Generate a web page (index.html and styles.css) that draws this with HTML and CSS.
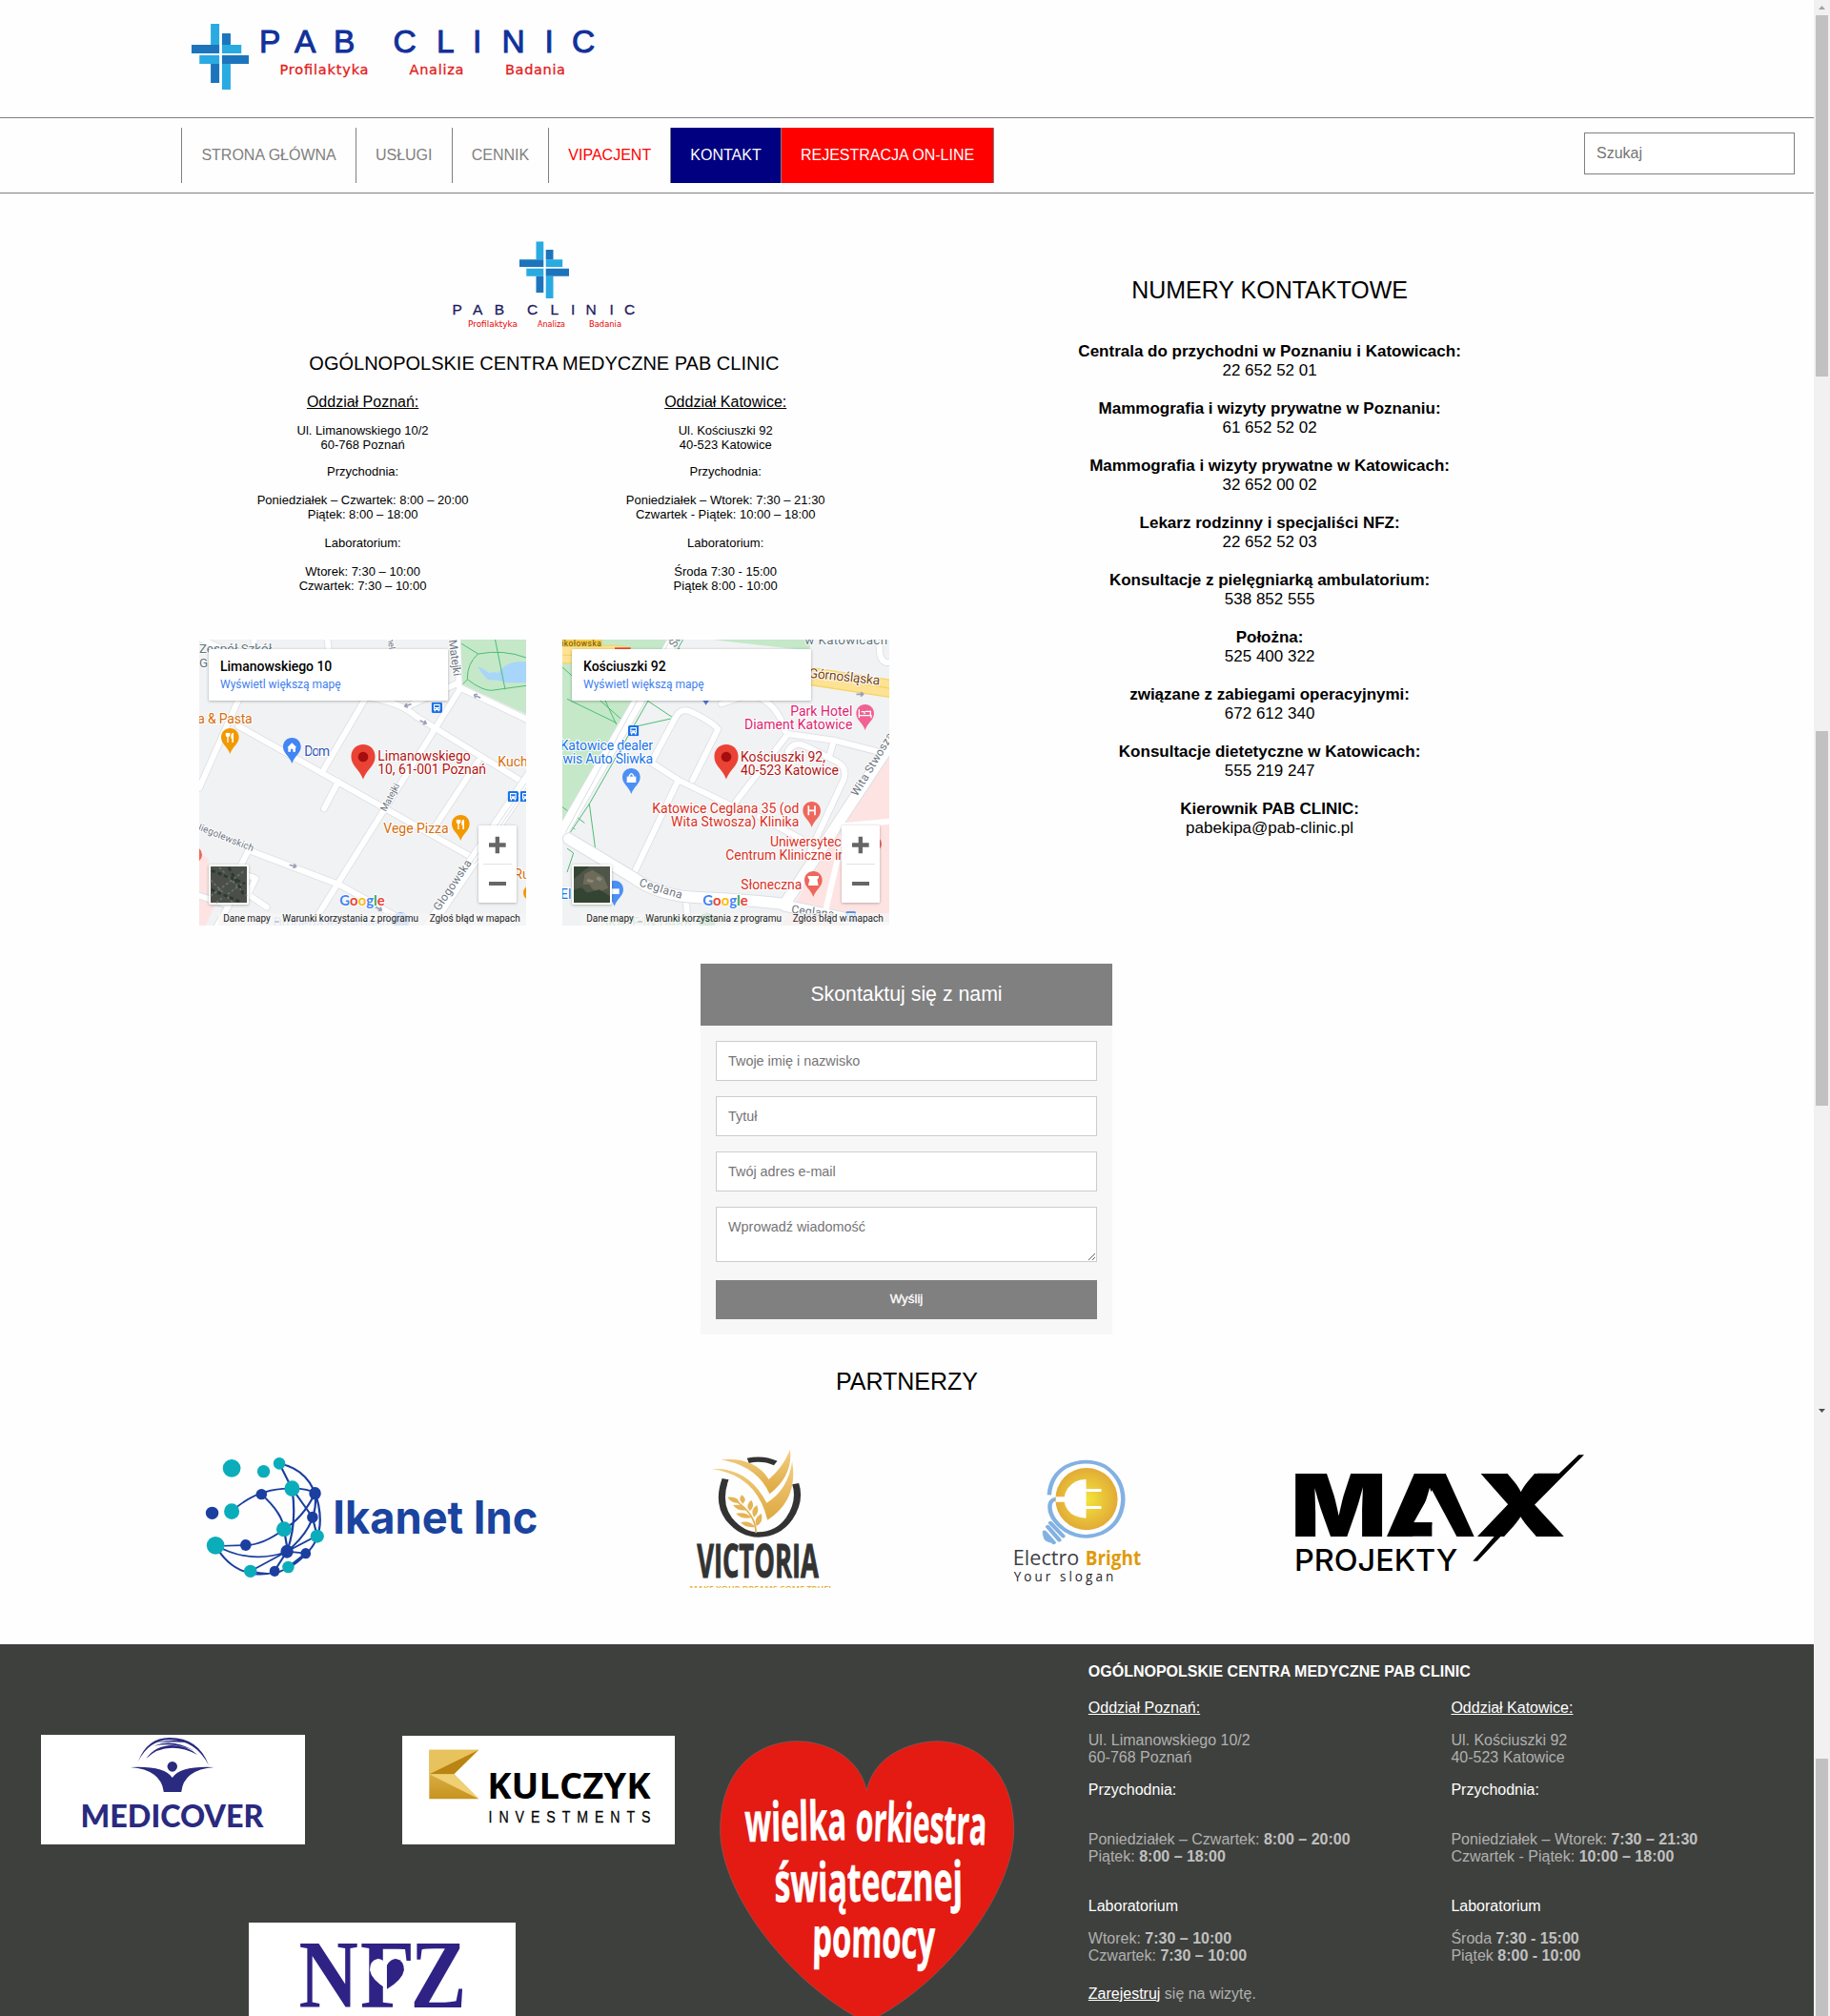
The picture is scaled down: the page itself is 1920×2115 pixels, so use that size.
FILE: index.html
```html
<!DOCTYPE html>
<html lang="pl">
<head>
<meta charset="utf-8">
<title>PAB CLINIC – Kontakt</title>
<link rel="stylesheet" href="styles.css">
</head>
<body>
<svg class="defs" width="0" height="0" aria-hidden="true">
  <symbol id="cross" viewBox="37 75 107 207" preserveAspectRatio="none">
    <path fill="#29abe2" d="M73 75h16v66H73zM94 141h36v27H94zM52 174h37v27H52zM94 201h16v81H94z"/>
    <path fill="#1c75bc" d="M94 105h16v36H94zM37 141h52v27H37zM94 174h50v27H94zM73 201h16v60H73z"/>
  </symbol>
  <symbol id="pin" viewBox="0 0 58 84">
    <path d="M29 1C13 1 1 13 1 29c0 22 19 28 28 53 9-25 28-31 28-53C57 13 45 1 29 1z"/>
  </symbol>
  <symbol id="fork" viewBox="0 0 30 32">
    <path fill="#fff" d="M1 0h14v8q0 5-5 6v17H6V14q-5-1-5-6zM18 8q0-7 8-8v31h-5V18h-3z"/>
  </symbol>
  <symbol id="bus" viewBox="0 0 34 34">
    <rect width="34" height="34" rx="5" fill="#1a73e8"/>
    <path fill="#fff" d="M7 6h20v19h-2v4h-4v-4h-8v4H9v-4H7z"/>
    <path fill="#1a73e8" d="M10 10h14v6H10zM10 19h3v3h-3zM21 19h3v3h-3z"/>
  </symbol>
  <symbol id="arrow" viewBox="0 0 26 16"><path fill="none" stroke="#9aa0b4" stroke-width="5" d="M0 8h20M14 1l8 7-8 7"/></symbol>
  <symbol id="google" viewBox="0 0 160 60">
    <text x="2" y="40" class="google" textLength="142" lengthAdjust="spacingAndGlyphs"><tspan fill="#4285f4">G</tspan><tspan fill="#ea4335">o</tspan><tspan fill="#fbbc04">o</tspan><tspan fill="#4285f4">g</tspan><tspan fill="#34a853">l</tspan><tspan fill="#ea4335">e</tspan></text>
  </symbol>
  <symbol id="mapui" viewBox="0 0 1029 900">
    <rect class="shade" x="30" y="30" width="753" height="162" rx="4"/>
    <rect class="shade" x="879" y="585" width="120" height="243" rx="4"/>
    <path stroke="#e0e0e0" stroke-width="3" d="M894 707h90"/>
    <path fill="#666" d="M912 640h20v-20h13v20h20v13h-20v20h-13v-20h-20zM912 762h54v12h-54z"/>
    <rect x="60" y="861" width="969" height="39" fill="#f5f5f5" opacity=".75"/>
    <g class="legal">
      <text x="76" y="888" textLength="148">Dane mapy</text>
      <path stroke="#777" stroke-width="2" d="M238 888h14"/>
      <text x="262" y="888" textLength="428">Warunki korzystania z programu</text>
      <text x="725" y="888" textLength="285">Zgłoś błąd w mapach</text>
    </g>
    <use href="#google" x="440" y="798" width="160" height="60"/>
    <use href="#pin" x="475" y="329" width="82" height="113" fill="#ea4335"/>
    <circle cx="516" cy="369" r="16" fill="#a50e0e"/>
  </symbol>
</svg>
<div class="page">
<div class="site">
  <header class="top">
    <svg class="brand" viewBox="190 20 450 80" role="img" aria-label="PAB CLINIC">
      <use href="#cross" x="200.8" y="25" width="60.3" height="69"/>
      <text class="brand-name" y="55" x="272 309 350 390 412.4 458 496 526.5 571.5 600">PAB CLINIC</text>
      <g class="brand-sub">
        <text x="293.5" y="78" textLength="93">Profilaktyka</text>
        <text x="429.5" y="78" textLength="57">Analiza</text>
        <text x="530" y="78" textLength="63">Badania</text>
      </g>
    </svg>
  </header>
  <nav class="nav">
    <ul class="menu">
      <li>STRONA GŁÓWNA</li><li>USŁUGI</li><li>CENNIK</li><li class="red">VIPACJENT</li><li class="active">KONTAKT</li><li class="register">REJESTRACJA ON-LINE</li>
    </ul>
    <input class="search" type="text" placeholder="Szukaj">
  </nav>

  <main>
    <section class="contact">
      <div class="places">
        <svg class="mini-brand" viewBox="470 250 202 100">
          <use href="#cross" x="545" y="253.3" width="52" height="59.7"/>
          <text class="mini-name" y="330" x="474.5 496 518.8 538 553 577.6 599 614.4 639.6 655">PAB CLINIC</text>
          <g class="mini-sub">
            <text x="491" y="343" textLength="52" lengthAdjust="spacingAndGlyphs">Profilaktyka</text>
            <text x="564" y="343" textLength="29" lengthAdjust="spacingAndGlyphs">Analiza</text>
            <text x="618" y="343" textLength="34" lengthAdjust="spacingAndGlyphs">Badania</text>
          </g>
        </svg>
        <h1>OGÓLNOPOLSKIE CENTRA MEDYCZNE PAB CLINIC</h1>
        <div class="cols">
          <div class="place">
            <h2>Oddział Poznań:</h2>
            <p>Ul. Limanowskiego 10/2<br>60-768 Poznań</p>
            <p class="tight">Przychodnia:</p>
            <p>Poniedziałek – Czwartek: 8:00 – 20:00<br>Piątek: 8:00 – 18:00</p>
            <p>Laboratorium:</p>
            <p>Wtorek: 7:30 – 10:00<br>Czwartek: 7:30 – 10:00</p>
          </div>
          <div class="place">
            <h2>Oddział Katowice:</h2>
            <p>Ul. Kościuszki 92<br>40-523 Katowice</p>
            <p class="tight">Przychodnia:</p>
            <p>Poniedziałek – Wtorek: 7:30 – 21:30<br>Czwartek - Piątek: 10:00 – 18:00</p>
            <p>Laboratorium:</p>
            <p>Środa 7:30 - 15:00<br>Piątek 8:00 - 10:00</p>
          </div>
        </div>
        <div class="maps">
          <svg class="map" viewBox="27 33 1029 900">
            <rect x="27" y="33" width="1029" height="900" fill="#f1f2f3"/>
            <path fill="#c5e8c9" d="M835 33h221v235L850 172z"/>
            <path fill="#a8d5fa" d="M903 118q20 5 35 20 15-5 30 0 20-30 60-35h28v66h-60q-30-10-60-10-20-18-33-41z"/>
            <path class="trail" d="M835 35l70 43q-35 30-34 80 45 35 75 35l110-15M905 78q80-15 151 12M990 190l-32-160M871 158q-8 10-15 15"/>
            <path fill="#fde4e3" d="M27 700l30 25v130l-30-10zM27 845h60l-40 88H27z"/>
            <g class="edge"><path d="M30 30l130 60M200 30l0 60M430 30l8 60M27 500L165 190M150 305L880 715M420 440L555 210M420 565l45-85M560 215q100 15 150 60L1060 490M380 933L850 185 L1060 285M690 240l150-70M840 30l5 150M770 620L905 415M180 695L470 805 640 900M160 740l20-40M165 770l40 15-25 50 60 40M30 840l90 30-40 70"/></g>
            <g class="road"><path d="M30 30l130 60M200 30l0 60M430 30l8 60M27 500L165 190M150 305L880 715M420 440L555 210M420 565l45-85M560 215q100 15 150 60L1060 490M380 933L850 185 L1060 285M690 240l150-70M840 30l5 150M770 620L905 415M180 695L470 805 640 900M160 740l20-40M165 770l40 15-25 50 60 40M30 840l90 30-40 70"/></g>
            <path class="edge wide" d="M740 950L1090 430"/><path class="road wide" d="M740 950L1090 430"/>
            <path stroke="#c9ccd2" stroke-width="2" d="M885 735L1056 485M893 740L1056 500"/>
            <use href="#arrow" x="720" y="285" width="26" height="16" transform="rotate(25 733 293)"/>
            <use href="#arrow" x="310" y="737" width="26" height="16" transform="rotate(15 323 745)"/>
            <use href="#arrow" x="670" y="232" width="26" height="16" transform="rotate(160 683 240)"/>
            <use href="#arrow" x="888" y="203" width="26" height="16" transform="rotate(205 901 211)"/>
            <use href="#arrow" x="580" y="872" width="26" height="16" transform="rotate(30 593 880)"/>
            <g class="street">
              <text x="27" y="75" class="big">Zespół Szkół</text><text x="27" y="120" class="big">Gi</text>
              <text transform="translate(812 35) rotate(82)" textLength="115">Matejki</text>
              <text transform="translate(615 -5) rotate(82)" font-size="28">Kanel</text>
              <text transform="translate(614 576) rotate(-62)" class="small" textLength="95">Matejki</text>
              <text transform="translate(10 626) rotate(22)" class="small" textLength="198">Niegolewskich</text>
              <text transform="translate(782 889) rotate(-56)" textLength="185">Głogowska</text>
            </g>
            <g class="poi">
              <text x="22" y="297" class="food" textLength="172">a &amp; Pasta</text>
              <use href="#pin" x="95" y="311" width="58" height="84" fill="#f29900"/><use href="#fork" x="109" y="326" width="30" height="32"/>
              <use href="#pin" x="290" y="341" width="58" height="84" fill="#4285f4"/><path fill="#fff" d="M304 373l15-15 15 15h-4v13h-8v-9h-7v9h-8v-13z"/>
              <text x="358" y="399" fill="#2f55b5" textLength="80">Dom</text>
              <text x="967" y="432" class="food">Kuchnia</text>
              <text x="607" y="642" class="food" textLength="205">Vege Pizza</text>
              <use href="#pin" x="821" y="584" width="58" height="84" fill="#f29900"/><use href="#fork" x="835" y="599" width="30" height="32"/>
              <text x="1018" y="787" class="food">Ru</text><circle cx="1071" cy="830" r="24" fill="#f29900"/>
              <circle cx="11" cy="710" r="25" fill="#ee675c"/>
              <text x="589" y="415" class="target" textLength="292">Limanowskiego</text>
              <text x="589" y="457" class="target" textLength="341">10, 61-001 Poznań</text>
              <text x="260" y="938" fill="#9fbdf5" textLength="365">Drogeria Rossmann</text>
              <circle cx="661" cy="918" r="27" fill="#8db5f5"/>
            </g>
            <use href="#bus" x="758" y="230" width="34" height="34"/><use href="#bus" x="998" y="510" width="34" height="34"/><use href="#bus" x="1037" y="510" width="34" height="34"/>
            <use href="#mapui" x="27" y="33" width="1029" height="900"/>
            <text x="93" y="132" class="place-name" textLength="352">Limanowskiego 10</text>
            <text x="93" y="186" class="place-link" textLength="380">Wyświetl większą mapę</text>
            <rect class="shade" x="57" y="741" width="126" height="126" rx="6"/>
            <rect x="63" y="747" width="114" height="114" fill="#4a4f49"/>
            <path stroke="#6d6f69" stroke-width="5" stroke-dasharray="9 6" d="M63 840L170 760M80 861L177 790M63 790l70 71M90 750l87 90"/><path stroke="#2c3a30" stroke-width="9" stroke-dasharray="12 9" d="M66 760l105 40M65 820l90 38M120 750l50 90"/>
          </svg>
          <svg class="map" viewBox="30 33 1029 900">
            <rect x="30" y="33" width="1029" height="900" fill="#f1f2f4"/>
            <path fill="#c5e8c9" d="M30 33h350L30 660zM500 33h309v35z"/>
            <path fill="#fde4e3" d="M1059 340v593H720l60-100L960 540z"/>
            <path class="trail" d="M30 120l210 185M45 220l155 75M165 225l35 75M380 280L200 320M410 33L115 550l20 150M290 220l90 60M30 600l40 30M115 550l-60 90M45 690l20 15-20 60M30 560l70 50M400 60l-50 30"/>
            <path fill="none" stroke="#f5d565" stroke-width="58" d="M20 80h120q60-5 100 5M790 145l290 45"/>
            <path fill="none" stroke="#fde293" stroke-width="50" d="M20 80h120q60-5 100 5M790 145l290 45"/>
            <path stroke="#f5d565" stroke-width="4" d="M800 140l259 46M30 82h120"/>
            <path class="edge wide" d="M400 0L30 640"/><path class="road wide" d="M400 0L30 640"/>
            <path stroke="#c9ccd2" stroke-width="2" d="M370 33L40 640"/>
            <g class="edge"><path d="M250 780L395 475M310 420L395 475 560 555 M310 420l75-140q20-40 60-15 60 30 75 50l-80 160M575 545L740 330l145 20 175 45M885 350l-15 50M740 385q20-35 60-15l90 45q40 20 25 60L800 720M650 590l130 70M640 210q70 30 90 110M530 235l60-20M420 860l5 73M1030 30q-10 80 30 75"/></g>
            <g class="road"><path d="M250 780L395 475M310 420L395 475 560 555 M310 420l75-140q20-40 60-15 60 30 75 50l-80 160M575 545L740 330l145 20 175 45M885 350l-15 50M740 385q20-35 60-15l90 45q40 20 25 60L800 720M650 590l130 70M640 210q70 30 90 110M530 235l60-20M420 860l5 73M1030 30q-10 80 30 75"/></g>
            <path class="edge wide" d="M50 660l200 120q80 60 210 65t270 20L1070 350M730 870l330 70"/>
            <path class="road mid" d="M50 660l200 120q80 60 210 65t270 20L1070 350M730 870l330 70"/>
            <path class="road" d="M900 620l160-15M920 620l-60 260"/>
            <use href="#arrow" x="955" y="197" width="26" height="16"/>
            <g class="street">
              <text transform="translate(385 60) rotate(-58)">Ści</text>
              <text transform="translate(958 528) rotate(-59)" textLength="225">Wita Stwosza</text>
              <text transform="translate(270 808) rotate(17)" textLength="140">Ceglana</text>
              <text transform="translate(750 893) rotate(7)" textLength="135">Ceglana</text>
              <text x="793" y="47" class="big" textLength="260">w Katowicach</text>
            </g>
            <rect x="27" y="33" width="128" height="22" fill="#f6ca4b"/><text x="28" y="53" font-size="25" fill="#66500a" textLength="124">ikołowska</text>
            <path fill="#e54b3c" d="M195 58h50v5h-50z"/>
            <g class="poi">
              <text transform="translate(805 152) rotate(6)" fill="#79450f" textLength="225">Górnośląska</text>
              <text x="943" y="273" class="hotel">Park Hotel</text><text x="943" y="315" class="hotel" textLength="340">Diament Katowice</text>
              <use href="#pin" x="954" y="236" width="58" height="84" fill="#f06292"/><path fill="none" stroke="#fff" stroke-width="4" d="M964 253v26M964 272h38v8M971 260h10v8M984 259h16v12"/>
              <use href="#pin" x="470" y="205" width="24" height="37" fill="#5a74d6"/>
              <use href="#bus" x="237" y="303" width="34" height="34"/>
              <text x="315" y="381" class="shop" textLength="292">Katowice dealer</text><text x="315" y="423" class="shop" textLength="340">serwis Auto Śliwka</text>
              <use href="#pin" x="218" y="437" width="58" height="84" fill="#4d90f5"/><path fill="#fff" d="M233 464h29v19h-29z"/><path fill="none" stroke="#fff" stroke-width="4" d="M240 465q7-20 15 0"/>
              <text x="591" y="417" class="target" textLength="267">Kościuszki 92,</text><text x="591" y="459" class="target" textLength="309">40-523 Katowice</text>
              <text x="775" y="579" class="med" textLength="462">Katowice Ceglana 35 (od</text><text x="775" y="621" class="med" textLength="403">Wita Stwosza) Klinika</text>
              <use href="#pin" x="786" y="542" width="58" height="84" fill="#ee675c"/><path stroke="#fff" stroke-width="5" d="M805 556v30M825 556v30M805 571h20"/>
              <text x="908" y="684" class="med" textLength="224">Uniwersytec</text><text x="921" y="726" class="med" textLength="377">Centrum Kliniczne in</text>
              <circle cx="1010" cy="676" r="25" fill="#ee675c"/>
              <text x="784" y="818" class="med" textLength="192">Słoneczna</text>
              <use href="#pin" x="791" y="761" width="58" height="84" fill="#ee675c"/><path fill="#fff" d="M803 777h34v6l-5 5 4 19h-32l4-19-5-5z"/>
              <text x="58" y="849" class="shop">El</text>
              <use href="#pin" x="165" y="790" width="58" height="84" fill="#4d90f5"/><path fill="#fff" d="M180 817h29v17h-29z"/>
              <text x="150" y="940" fill="#8ecf9f" textLength="290">SKATE IN DARK</text><circle cx="485" cy="920" r="27" fill="#81c995"/>
            </g>
            <use href="#bus" x="922" y="888" width="32" height="32" opacity=".7"/>
            <use href="#mapui" x="30" y="33" width="1029" height="900"/>
            <text x="96" y="132" class="place-name" textLength="260">Kościuszki 92</text>
            <text x="96" y="186" class="place-link" textLength="380">Wyświetl większą mapę</text>
            <rect class="shade" x="60" y="741" width="126" height="126" rx="6"/>
            <rect x="66" y="747" width="114" height="114" fill="#4f5547"/>
            <path fill="#6d6b5a" d="M100 770l25-12 35 22 15 35-30 12-20-8-10-16-20 2z"/><path fill="#8a8778" d="M110 785l20 6-6 8-18-5zM142 778l14 8-8 8-12-8z"/><path fill="#334532" d="M66 820l25-6 18 16 37-10 34 20v21H66zM66 747h50l-20 14-30 26z"/>
          </svg>
        </div>
      </div>
      <div class="phones">
        <h2>NUMERY KONTAKTOWE</h2>
        <p><b>Centrala do przychodni w Poznaniu i Katowicach:</b><br>22 652 52 01</p>
        <p><b>Mammografia i wizyty prywatne w Poznaniu:</b><br>61 652 52 02</p>
        <p><b>Mammografia i wizyty prywatne w Katowicach:</b><br>32 652 00 02</p>
        <p><b>Lekarz rodzinny i specjaliści NFZ:</b><br>22 652 52 03</p>
        <p><b>Konsultacje z pielęgniarką ambulatorium:</b><br>538 852 555</p>
        <p><b>Położna:</b><br>525 400 322</p>
        <p><b>związane z zabiegami operacyjnymi:</b><br>672 612 340</p>
        <p><b>Konsultacje dietetyczne w Katowicach:</b><br>555 219 247</p>
        <p><b>Kierownik PAB CLINIC:</b><br>pabekipa@pab-clinic.pl</p>
      </div>
    </section>

    <form class="form">
      <h2>Skontaktuj się z nami</h2>
      <div class="fields">
        <input type="text" placeholder="Twoje imię i nazwisko">
        <input type="text" placeholder="Tytuł">
        <input type="text" placeholder="Twój adres e-mail">
        <textarea placeholder="Wprowadź wiadomość"></textarea>
        <button type="button">Wyślij</button>
      </div>
    </form>

    <section class="partners">
      <h2>PARTNERZY</h2>
      <div class="logos">
        <svg viewBox="-22 0 853 570" preserveAspectRatio="none">
          <g fill="none" stroke="#1b3fa0" stroke-width="5">
            <path d="M209 106q75 20 92 130 15 100-30 155-45 70-120 63-60-12-92-90M209 106l30 80M97 257q60-75 142-72 40 0 54 15M167 203q50 60 53 110l9 70M239 185l48 90 11 60M239 185q12 110-12 198M293 200q10 100-66 183M293 200q-30 80-73 113M220 313q-50 50-90 50l-70 3M60 364q80 60 167 20M141 445l86-62 71-50M141 445q60 20 90-14l40-42M227 383l-30 62M227 383l44 6"/>
          </g>
          <g fill="#0badba"><ellipse cx="97" cy="121" rx="21" ry="28"/><ellipse cx="172" cy="131" rx="15" ry="20"/><ellipse cx="209" cy="106" rx="14" ry="19"/><ellipse cx="239" cy="185" rx="18" ry="25"/><ellipse cx="97" cy="257" rx="18" ry="25"/><ellipse cx="220" cy="313" rx="18" ry="24"/><ellipse cx="298" cy="335" rx="16" ry="21"/><ellipse cx="59" cy="364" rx="21" ry="28"/><ellipse cx="141" cy="445" rx="15" ry="20"/><ellipse cx="230" cy="432" rx="14" ry="19"/></g>
          <g fill="#1b3fa0"><ellipse cx="51" cy="262" rx="15" ry="20"/><ellipse cx="167" cy="203" rx="13" ry="17"/><ellipse cx="293" cy="200" rx="14" ry="20"/><ellipse cx="287" cy="275" rx="13" ry="18"/><ellipse cx="130" cy="363" rx="13" ry="18"/><ellipse cx="227" cy="383" rx="15" ry="21"/><ellipse cx="271" cy="389" rx="12" ry="17"/><ellipse cx="198" cy="445" rx="12" ry="17"/></g>
          <text class="ikanet" x="335" y="327" textLength="482" lengthAdjust="spacingAndGlyphs">Ikanet Inc</text>
        </svg>
        <svg viewBox="831 0 853 570" preserveAspectRatio="none">
          <defs>
            <linearGradient id="gold" x2="0" y2="1"><stop stop-color="#f3cf85"/><stop offset="1" stop-color="#dda83e"/></linearGradient>
            <clipPath id="cut"><path d="M1160 480h360v17h-360z"/></clipPath>
          </defs>
          <path fill="none" stroke="#333" stroke-width="16" d="M1257 155q-20 75 8 125 30 50 70 50 45 0 72-50 28-55 15-110M1310 97q35-10 65 8"/>
          <path fill="url(#gold)" d="M1246 94q80-10 113 62 35-40 50-94 8 80-48 140-30-90-115-108z"/>
          <path fill="url(#gold)" d="M1226 123q85-5 128 107 50-40 60-130 15 120-58 184-25-140-130-161z"/>
          <path fill="none" stroke="#e2b04d" stroke-width="4" d="M1329 325q0-60-52-105"/>
          <path fill="#e5b455" d="M1262 212q25-3 28 18-20 2-28-18zM1295 205q15 12 3 28-12-12-3-28zM1275 237q25-5 32 16-22 4-32-16zM1318 221q10 20-4 34-12-18 4-34zM1282 263q25-6 37 14-25 6-37-14zM1331 237q8 24-7 38-10-22 7-38zM1293 292q20-8 34 14-22 4-34-14zM1342 263q5 28-12 40-8-24 12-40z"/>
          <text class="victoria" x="1190" y="466" textLength="286" lengthAdjust="spacingAndGlyphs">VICTORIA</text>
          <g clip-path="url(#cut)"><text class="victoria-sub" x="1173" y="508" textLength="332" lengthAdjust="spacingAndGlyphs">MAKE YOUR DREAMS COME TRUE!</text></g>
        </svg>
        <svg viewBox="-217 0 932.5 570" preserveAspectRatio="none">
          <defs><radialGradient id="glow"><stop stop-color="#f3e53a"/><stop offset="1" stop-color="#e2ab37"/></radialGradient></defs>
          <path fill="none" stroke="#82b1e2" stroke-width="11" d="M150 205q4-62 45-90 50-28 98 0 47 38 47 105-3 75-55 105-50 25-95-10-42-38-38-80 3-15 16-17"/>
          <ellipse cx="246" cy="218" rx="80" ry="98" fill="url(#glow)"/>
          <path fill="#fff" d="M245 156v122q-32 0-47-25-8-14-9-26h-22v-16h22q1-12 9-27 17-28 47-28zM245 186h39v9h-39zM245 240h39v9h-39z"/>
          <path stroke="#82b1e2" stroke-width="11" stroke-linecap="round" d="M153 293l33 42M146 305l30 42M138 322l24 33"/><path fill="#82b1e2" d="M132 325l35 32q-22 0-30-12z"/>
          <g class="electro">
            <text x="57" y="425" font-size="64" fill="#3f3f46" textLength="170" lengthAdjust="spacingAndGlyphs">Electro</text>
            <text x="243" y="425" font-size="64" font-weight="700" fill="#e09a0b" textLength="143" lengthAdjust="spacingAndGlyphs">Bright</text>
            <text transform="translate(59 477) scale(.72 1)" font-size="46" fill="#26262b" textLength="356">Your slogan</text>
          </g>
        </svg>
        <svg viewBox="715.5 0 932.5 570" preserveAspectRatio="none">
          <text class="max" x="770" y="335" textLength="247" lengthAdjust="spacingAndGlyphs">M</text>
          <text class="max" x="1010" y="335" textLength="238" lengthAdjust="spacingAndGlyphs">A</text>
          <text class="max" x="1243" y="335" textLength="236" lengthAdjust="spacingAndGlyphs">X</text>
          <path fill="#fff" d="M1133 190l64 147h-64v-45h-47z"/><path d="M1075 292h58v43h-80z"/>
          <path d="M1404 137h56l50-58h14L1396 237l-30-42zM1290 330h24l-64 83h-12l55-77z"/>
          <text class="projekty" x="779" y="443" textLength="420" lengthAdjust="spacingAndGlyphs">PROJEKTY</text>
        </svg>
      </div>
    </section>
  </main>

  <footer class="footer">
    <div class="sponsors">
      <div class="row">
        <svg class="medicover" viewBox="91 60 587 345" preserveAspectRatio="none">
          <g fill="#2a2a80">
            <path d="M307 144q20-75 70-75 65 0 87 87-30-80-87-80-45 0-70 68zM342 95q40-25 90 15-45-28-90-15zM325 135q20-42 58-42 32 0 56 30-28-22-56-22-35 0-58 34zM350 84q40-12 70 1-30-5-70-1z"/>
            <ellipse cx="383" cy="160" rx="11" ry="16"/>
            <path d="M290 162q75-5 93 33 18-38 93-33-68 8-73 78h-39q-6-70-74-78z"/>
          </g>
          <text class="medi" x="179" y="350" textLength="407" lengthAdjust="spacingAndGlyphs">MEDICOVER</text>
        </svg>
        <svg class="kulczyk" viewBox="894 63 606 342" preserveAspectRatio="none">
          <defs><linearGradient id="g2" x2="0" y2="1"><stop stop-color="#e9c561"/><stop offset="1" stop-color="#c89321"/></linearGradient></defs>
          <path fill="url(#g2)" d="M954 107h110l-55 77 55 78H954z"/>
          <path fill="#b98412" d="M954 184l110-77-55 77z"/><path fill="#f0d074" d="M954 184h55l55 78z"/><path fill="#e8c25c" d="M954 107h110l-110 77z"/>
          <text class="kul" x="1083" y="262" textLength="363" lengthAdjust="spacingAndGlyphs">KULCZYK</text>
          <text class="inv" transform="translate(1086 335) scale(.6 1)" textLength="600">INVESTMENTS</text>
        </svg>
      </div>
      <svg class="nfz" viewBox="553 651 593 294" preserveAspectRatio="none">
        <g class="nfz-text"><text x="664" y="917" textLength="132" lengthAdjust="spacingAndGlyphs">N</text><text x="800" y="917" textLength="122" lengthAdjust="spacingAndGlyphs">F</text><text x="912" y="917" textLength="125" lengthAdjust="spacingAndGlyphs">Z</text></g>
        <path fill="#fff" d="M860 778h44v90h-44zM860 785q-8-20-20-20-18 5-18 35 3 30 38 60z"/><path fill="#2f2285" d="M860 785q8-20 20-20 18 5 18 35-3 30-38 60z"/>
      </svg>
    </div>
    <svg class="heart" viewBox="60 60 960 885">
      <path fill="#e31b13" stroke="#8f6a65" stroke-width="1.5" d="M538 235C515 130 410 80 318 80 190 82 77 170 77 360 77 560 300 850 538 965 780 850 1001 560 1001 360 1001 170 880 82 760 80 665 82 560 130 538 235z"/>
      <g class="wosp">
        <text transform="translate(155 396) rotate(-1)" textLength="320" lengthAdjust="spacingAndGlyphs">wielka</text>
        <text transform="translate(502 392) rotate(2)" textLength="412" lengthAdjust="spacingAndGlyphs">orkiestra</text>
        <text transform="translate(248 586) rotate(-.5)" textLength="592" lengthAdjust="spacingAndGlyphs">świątecznej</text>
        <text transform="translate(366 757) rotate(1)" textLength="386" lengthAdjust="spacingAndGlyphs">pomocy</text>
      </g>
    </svg>
    <div class="info">
      <h3>OGÓLNOPOLSKIE CENTRA MEDYCZNE PAB CLINIC</h3>
      <div class="info-cols">
        <div>
          <h4>Oddział Poznań:</h4>
          <p>Ul. Limanowskiego 10/2<br>60-768 Poznań</p>
          <h5>Przychodnia:</h5>
          <p class="far">Poniedziałek – Czwartek: <b>8:00 – 20:00</b><br>Piątek: <b>8:00 – 18:00</b></p>
          <h5 class="far">Laboratorium</h5>
          <p>Wtorek: <b>7:30 – 10:00</b><br>Czwartek: <b>7:30 – 10:00</b></p>
          <p class="book"><a>Zarejestruj</a> się na wizytę.</p>
        </div>
        <div>
          <h4>Oddział Katowice:</h4>
          <p>Ul. Kościuszki 92<br>40-523 Katowice</p>
          <h5>Przychodnia:</h5>
          <p class="far">Poniedziałek – Wtorek: <b>7:30 – 21:30</b><br>Czwartek - Piątek: <b>10:00 – 18:00</b></p>
          <h5 class="far">Laboratorium</h5>
          <p>Środa <b>7:30 - 15:00</b><br>Piątek <b>8:00 - 10:00</b></p>
        </div>
      </div>
    </div>
  </footer>
</div>
<svg class="scroll" viewBox="0 0 17 2115">
  <path fill="#c1c1c1" d="M2 16h13v379H2zM2 767h13v393H2zM2 1845h13v270H2z"/>
  <path fill="#a3a3a3" d="M5 10l3.500-4 3.500 4z"/><path fill="#505050" d="M5 1478h7l-3.500 4z"/>
</svg>
</div>
</body>
</html>
```
FILE: styles.css
```css
* { box-sizing: border-box; }
body { margin: 0; background: #fefefe; color: #000; font-family: "Liberation Sans", Arial, sans-serif; font-size: 16px; }
h1, h2, h3, h4, h5, p, ul { margin: 0; padding: 0; font-weight: 400; }
svg { display: block; flex: none; }
.defs { position: absolute; }
.page { display: flex; width: 1920px; height: 2115px; overflow: hidden; }
.site { width: 1903px; flex: none; }
.scroll { width: 17px; height: 2115px; background: #f1f1f1; }

.top { height: 123px; padding: 20px 0 0 190px; }
.brand { width: 450px; height: 80px; }
.brand-name { font-size: 33.500px; fill: #11319a; stroke: #11319a; stroke-width: 1; }
.brand-sub { font: 14.500px "DejaVu Sans", sans-serif; fill: #e21b1b; stroke: #e21b1b; stroke-width: .3; }

.nav { display: flex; justify-content: space-between; height: 80px; padding: 10px 20px 10px 190.300px; border: solid gray; border-width: 1px 0; }
.menu { display: flex; list-style: none; border-left: 1px solid gray; }
.menu li { padding: 0 20.100px; line-height: 58px; color: gray; border-right: 1px solid gray; white-space: nowrap; }
.menu .red { color: #f00; }
.menu .active { background: navy; color: #fff; }
.menu .register { background: #f00; color: #fff; }
.search { width: 221px; height: 44px; margin-top: 5px; padding: 0 12px; border: 1px solid gray; font: 16px "Liberation Sans", Arial, sans-serif; background: #fff; }
::placeholder { color: #757575; opacity: 1; }

.contact { display: flex; padding: 47px 0 0 190.300px; }
.places, .phones { width: 761.200px; text-align: center; }
.mini-brand { width: 202px; height: 100px; margin: 0 auto; }
.mini-name { font-size: 15.500px; fill: #1d1a5e; stroke: #1d1a5e; stroke-width: .3; }
.mini-sub { font: 9px "DejaVu Sans", sans-serif; fill: #e80000; }
.places h1 { margin-top: 20px; font-size: 20px; line-height: 23px; }
.cols, .maps { display: grid; grid-template-columns: 1fr 1fr; }
.place { padding-top: 20px; font-size: 13px; line-height: 15px; }
.place h2 { margin-bottom: 13px; font-size: 16px; line-height: 18px; text-decoration: underline; }
.place p + p { margin-top: 15px; }
.place p.tight { margin-top: 13px; }
.maps { margin-top: 49px; justify-items: center; }
.map { width: 343px; height: 300px; overflow: hidden; font-family: Roboto, sans-serif; }
.edge, .road { fill: none; stroke: #dcdfe4; stroke-width: 23; stroke-linejoin: round; stroke-linecap: round; }
.road { stroke: #fff; stroke-width: 18; }
.edge.wide { stroke-width: 40; }
.road.wide { stroke-width: 35; }
.road.mid { stroke-width: 34; }
.trail { fill: none; stroke: #4dbd74; stroke-width: 3; }
.street { font-size: 36px; fill: #6b7480; stroke: #fff; stroke-width: 5; paint-order: stroke; }
.street .big { font-size: 40px; fill: #5f7681; }
.street .small { font-size: 30px; }
.poi { font-size: 42px; }
.poi text { stroke: #fff; stroke-width: 6; paint-order: stroke; }
.food { fill: #d56e0c; }
.target { fill: #b31412; }
.hotel { fill: #e01e72; text-anchor: end; }
.shop { fill: #1a73e8; text-anchor: end; }
.med { fill: #d93025; text-anchor: end; }
.shade { fill: #fff; filter: drop-shadow(0 2px 4px rgba(0, 0, 0, .3)); }
.place-name { font-size: 42px; font-weight: 500; fill: #000; }
.place-link { font-size: 36px; fill: #427fed; }
.legal { font-size: 30px; fill: #222; }
.google { font: 700 46px Lato, sans-serif; stroke: #fff; stroke-width: 5; paint-order: stroke; }

.phones { padding-top: 40px; font-size: 17px; line-height: 20px; }
.phones h2 { margin-bottom: 41px; font-size: 25px; line-height: 28px; }
.phones p { margin-bottom: 20px; }
.phones p:last-child { margin-bottom: 0; }

.form { width: 432px; margin: 40px 0 0 735px; background: #f7f7f7; }
.form h2 { height: 65px; background: gray; color: #fff; font-size: 21.300px; line-height: 64px; text-align: center; }
.fields { display: flex; flex-direction: column; gap: 16px; padding: 16px; }
.fields input, .fields textarea { height: 42px; padding: 0 12px; border: 1px solid #ccc; background: #fff; font: 14.400px "Liberation Sans", Arial, sans-serif; }
.fields textarea { height: 58px; padding-top: 12px; }
.fields button { height: 41px; margin-top: 3px; padding: 0 0 2px; border: 0; background: gray; color: #fff; font: 13.333px "Liberation Sans", Arial, sans-serif; -webkit-text-stroke: .3px #fff; }

.partners { padding-top: 35px; text-align: center; }
.partners h2 { font-size: 25px; line-height: 28px; }
.logos { display: grid; grid-template-columns: repeat(4, 380.600px); margin: 37px 0 35px 190.300px; }
.logos svg { width: 380.600px; height: 190px; }
.ikanet { font: 700 144px Inter, sans-serif; fill: #1a449f; }
.victoria { font: 700 144px "Open Sans", sans-serif; fill: #333; stroke: #333; stroke-width: 3; }
.victoria-sub { font: 700 23px "Open Sans", sans-serif; fill: #e5b030; }
.electro { font-family: "Open Sans", sans-serif; }
.max { font: 900 272px Inter, sans-serif; }
.projekty { font: 500 92px Inter, sans-serif; }

.footer { display: flex; height: 390px; overflow: hidden; background: #3e403d; color: #b0b0b0; }
.sponsors { width: 750px; padding-top: 95px; }
.row { display: flex; align-items: flex-end; padding-left: 43px; }
.medicover, .kulczyk, .nfz { background: #fff; }
.medicover { width: 277px; height: 115px; }
.kulczyk { width: 286px; height: 114px; margin-left: 102px; }
.nfz { width: 280px; height: 98px; margin: 82px 0 0 261px; }
.medi { font: 900 96px Lato, sans-serif; fill: #2a2a80; }
.kul { font: 700 110px "Open Sans", sans-serif; }
.inv { font: 400 50px "Liberation Sans", sans-serif; stroke: #000; stroke-width: .8; }
.nfz-text { font: 700 306px "Liberation Serif", serif; fill: #2f2285; }
.heart { width: 320px; height: 295px; margin-top: 95px; }
.wosp { font: 700 170px "Open Sans", sans-serif; fill: #fff; stroke: #fff; stroke-width: 2; }
.info { width: 761px; margin-left: 71.800px; padding-top: 20px; line-height: 18px; }
.info h3 { color: #fff; font-size: 16px; font-weight: 700; }
.info-cols { display: grid; grid-template-columns: 380.600px 380.600px; }
.info h4 { margin-top: 20px; color: #fff; font-size: 16px; text-decoration: underline; }
.info h5 { margin-top: 16px; color: #fff; font-size: 16px; }
.info p { margin-top: 16px; }
.info .far { margin-top: 34px; }
.info .book { margin-top: 22px; }
.info b { color: #c0c0c0; }
.info a { color: #fff; text-decoration: underline; }
```
